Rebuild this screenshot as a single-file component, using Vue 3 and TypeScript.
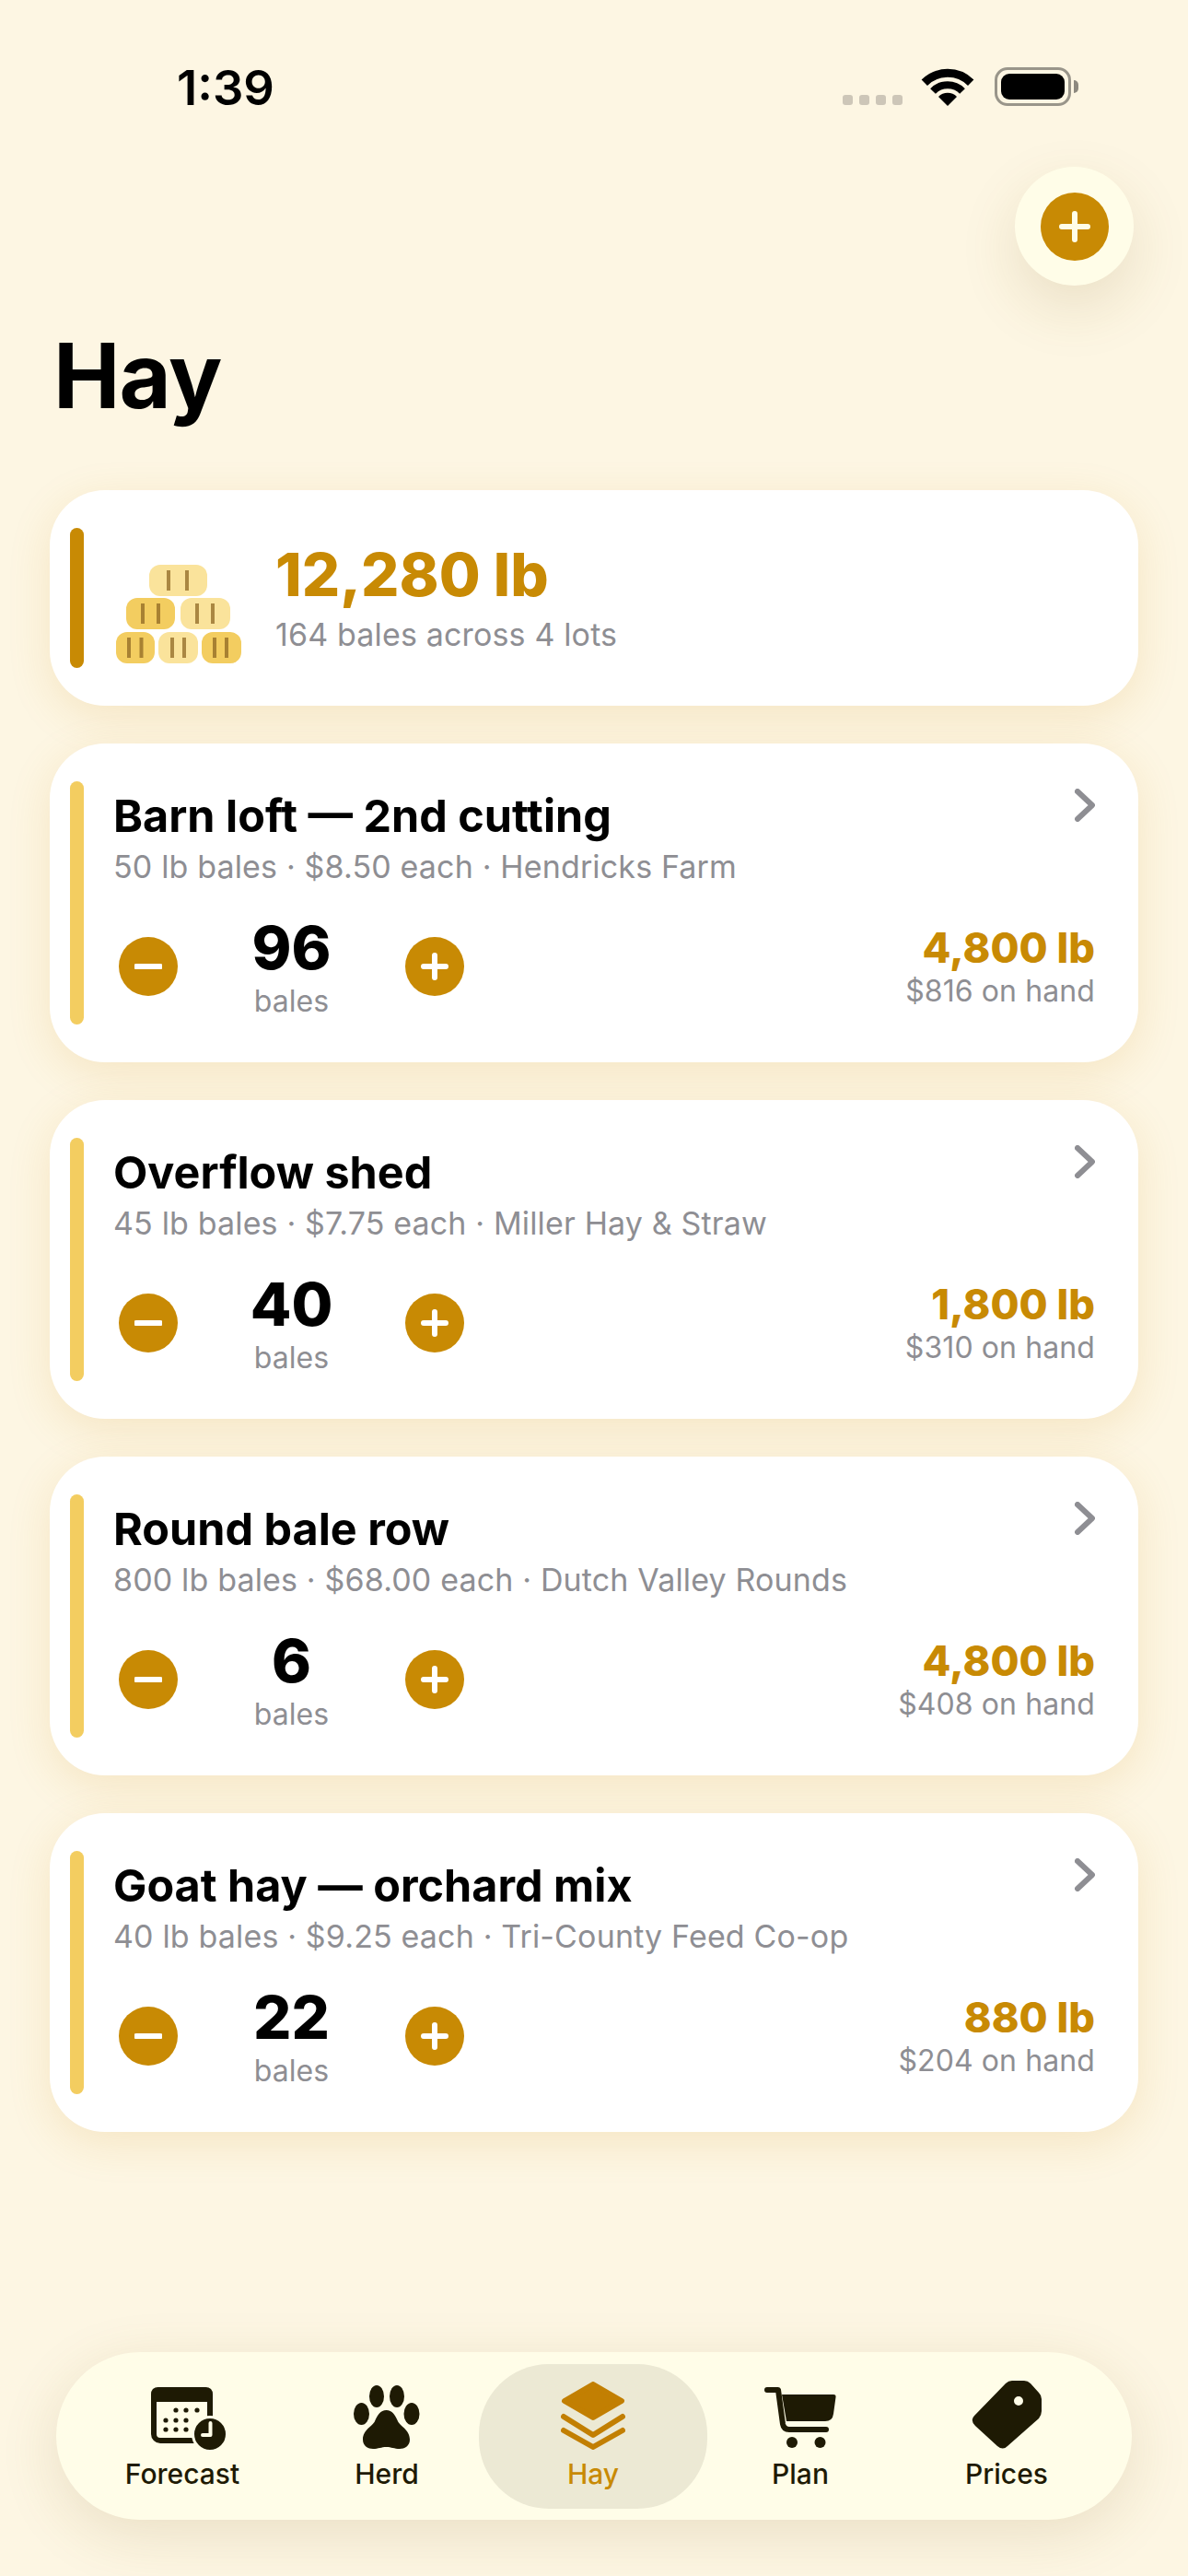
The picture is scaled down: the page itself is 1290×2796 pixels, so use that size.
<script setup lang="ts">
interface Lot {
  name: string;
  detail: string;
  count: number;
  weight: string;
  value: string;
}

const lots: Lot[] = [
  { name: "Barn loft — 2nd cutting", detail: "50 lb bales · $8.50 each · Hendricks Farm", count: 96, weight: "4,800 lb", value: "$816 on hand" },
  { name: "Overflow shed", detail: "45 lb bales · $7.75 each · Miller Hay & Straw", count: 40, weight: "1,800 lb", value: "$310 on hand" },
  { name: "Round bale row", detail: "800 lb bales · $68.00 each · Dutch Valley Rounds", count: 6, weight: "4,800 lb", value: "$408 on hand" },
  { name: "Goat hay — orchard mix", detail: "40 lb bales · $9.25 each · Tri-County Feed Co-op", count: 22, weight: "880 lb", value: "$204 on hand" },
];

const bales = [
  { x: 36, y: 1, w: 63, h: 34, fill: "#fae39b", s: [57, 77] },
  { x: 11, y: 37, w: 53, h: 34, fill: "#f3cd60", s: [29, 46] },
  { x: 70, y: 37, w: 54, h: 34, fill: "#fae39b", s: [88, 105] },
  { x: 0, y: 74, w: 42, h: 34, fill: "#f3cd60", s: [14, 27.5] },
  { x: 46, y: 74, w: 43, h: 34, fill: "#fae39b", s: [61, 74] },
  { x: 93, y: 74, w: 43, h: 34, fill: "#f3cd60", s: [107, 120] },
];

const calendarDots = [
  [27, 25], [38, 25], [50, 25],
  [16, 36], [27, 36], [38, 36],
  [16, 46], [27, 46], [38, 46],
];
</script>

<template>
  <div class="page">
    <header class="status">
      <span class="time">1:39</span>
      <div class="status-icons">
        <div class="signal"><i></i><i></i><i></i><i></i></div>
        <svg class="wifi" width="58" height="42" viewBox="0 0 58 42">
          <path d="M29 42L19 32A14 14 0 0 1 39 32Z" fill="#000" />
          <path d="M13 26A22.5 22.5 0 0 1 45 26" fill="none" stroke="#000" stroke-width="8" />
          <path d="M3.8 16.8A35.6 35.6 0 0 1 54.2 16.8" fill="none" stroke="#000" stroke-width="9" />
        </svg>
        <div class="battery"><span></span></div>
      </div>
    </header>

    <div class="top-action">
      <button class="fab">
        <span class="fab-inner">
          <svg width="34" height="34" viewBox="0 0 34 34"><path d="M17 3V31M3 17H31" stroke="#fffde8" stroke-width="6" stroke-linecap="round" /></svg>
        </span>
      </button>
    </div>

    <h1 class="title">Hay</h1>

    <main class="lots">
      <section class="card summary">
        <div class="bar bar-dark"></div>
        <svg class="stack" width="136" height="108" viewBox="0 0 136 108">
          <g v-for="(b, i) in bales" :key="i">
            <rect :x="b.x" :y="b.y" :width="b.w" :height="b.h" rx="12" :fill="b.fill" />
            <rect v-for="sx in b.s" :key="sx" :x="sx - 2" :y="b.y + 6" width="4" height="22" fill="#8a6420" opacity="0.72" />
          </g>
        </svg>
        <div class="summary-text">
          <div class="total">12,280 lb</div>
          <div class="muted summary-sub">164 bales across 4 lots</div>
        </div>
      </section>

      <section v-for="lot in lots" :key="lot.name" class="card lot">
        <div class="bar"></div>
        <div class="lot-body">
          <div class="lot-head">
            <div class="lot-text">
              <div class="lot-name">{{ lot.name }}</div>
              <div class="muted lot-detail">{{ lot.detail }}</div>
            </div>
            <svg class="chevron" width="22" height="36" viewBox="0 0 22 36"><path d="M3 3L19 18L3 33" fill="none" stroke="#8e8e93" stroke-width="6" stroke-linecap="round" stroke-linejoin="round" /></svg>
          </div>
          <div class="lot-row">
            <div class="stepper">
              <button class="step">
                <svg width="30" height="30" viewBox="0 0 30 30"><path d="M2 15H28" stroke="#fff" stroke-width="6" stroke-linecap="round" /></svg>
              </button>
              <div class="count">
                <div class="count-num">{{ lot.count }}</div>
                <div class="muted count-label">bales</div>
              </div>
              <button class="step">
                <svg width="30" height="30" viewBox="0 0 30 30"><path d="M15 3V27M3 15H27" stroke="#fff" stroke-width="6" stroke-linecap="round" /></svg>
              </button>
            </div>
            <div class="lot-totals">
              <div class="weight">{{ lot.weight }}</div>
              <div class="muted value">{{ lot.value }}</div>
            </div>
          </div>
        </div>
      </section>
    </main>

    <nav class="tabs">
      <div class="tab tab-forecast">
        <svg width="82" height="68" viewBox="0 0 82 68">
          <rect x="3" y="3" width="61" height="55" rx="7" fill="#fffde8" stroke="#1e1a04" stroke-width="6" />
          <path d="M0 16V8Q0 0 8 0H59Q67 0 67 8V16Z" fill="#1e1a04" />
          <circle v-for="(d, i) in calendarDots" :key="i" :cx="d[0]" :cy="d[1]" r="2.6" fill="#1e1a04" />
          <circle cx="64" cy="51" r="18.5" fill="#1e1a04" stroke="#fffde8" stroke-width="3" />
          <path d="M64.5 39V52H56" fill="none" stroke="#fffde8" stroke-width="4" stroke-linecap="round" stroke-linejoin="round" />
        </svg>
        <span>Forecast</span>
      </div>
      <div class="tab">
        <svg width="72" height="70" viewBox="0 0 72 70" fill="#1e1a04">
          <ellipse cx="25" cy="12" rx="8" ry="12" />
          <ellipse cx="47" cy="12" rx="8" ry="12" />
          <ellipse cx="8.5" cy="31" rx="8.5" ry="12" />
          <ellipse cx="63" cy="31" rx="8.5" ry="12" />
          <path d="M35.5 27C42 27 45 32 48 39C50 44 61 48 61 59C61 66 55 69 50 69C44 69 41 67 35.5 67C30 67 27 69 21 69C16 69 10 66 10 59C10 48 21 44 23 39C26 32 29 27 35.5 27Z" />
        </svg>
        <span>Herd</span>
      </div>
      <div class="tab tab-active">
        <svg width="70" height="74" viewBox="0 0 70 74">
          <path d="M35 3L66 21L35 39L4 21Z" fill="#c27f02" stroke="#c27f02" stroke-width="6" stroke-linejoin="round" />
          <path d="M3 38L35 58L67 38" fill="none" stroke="#c27f02" stroke-width="6" stroke-linecap="round" stroke-linejoin="round" />
          <path d="M3 53L35 71L67 53" fill="none" stroke="#c27f02" stroke-width="6" stroke-linecap="round" stroke-linejoin="round" />
        </svg>
        <span>Hay</span>
      </div>
      <div class="tab">
        <svg width="78" height="68" viewBox="0 0 78 68" fill="#1e1a04">
          <path d="M3 3H15L20 40Q21 46 27 46H67" fill="none" stroke="#1e1a04" stroke-width="6" stroke-linecap="round" stroke-linejoin="round" />
          <path d="M19 8H75Q78 8 77.5 11L75 29Q74 37 66 37H24Z" />
          <circle cx="30" cy="60" r="6" />
          <circle cx="60.5" cy="60" r="6" />
        </svg>
        <span>Plan</span>
      </div>
      <div class="tab">
        <svg width="76" height="75" viewBox="0 0 76 75">
          <path fill-rule="evenodd" fill="#1e1a04" d="M37 3Q40 0 44 0H57Q61 0 64 3L73 13Q76 16 76 20V33Q76 37 73 41L39 71Q34 76 28 71L4 49Q-2 43 3 38ZM51 17A5 5 0 1 0 51 27A5 5 0 1 0 51 17Z" />
        </svg>
        <span>Prices</span>
      </div>
    </nav>
  </div>
</template>

<style>
body {
  background: #fdf6e3;
}
</style>

<style scoped>
.page {
  width: 1290px;
  height: 2796px;
  display: flex;
  flex-direction: column;
  background: #fdf6e3;
  font-family: Inter, "Liberation Sans", sans-serif;
  color: #000;
  overflow: hidden;
}

.status {
  display: flex;
  justify-content: space-between;
  align-items: flex-start;
  padding: 64px 127px 0 192px;
  height: 181px;
  box-sizing: border-box;
}

.time {
  font-size: 52.5px;
  line-height: 62px;
  font-weight: 600;
}

.status-icons {
  display: flex;
  align-items: flex-end;
  padding-top: 9px;
}

.signal {
  display: flex;
  gap: 7px;
  margin: 0 20px 0 0;
  padding-bottom: 1px;
}

.signal i {
  width: 11px;
  height: 11px;
  border-radius: 3px;
  background: #cdc6b8;
}

.wifi {
  margin-right: 22px;
}

.battery {
  position: relative;
  width: 83px;
  height: 42px;
  box-sizing: border-box;
  border: 3px solid #99958a;
  border-radius: 14px;
  padding: 4px;
}

.battery span {
  display: block;
  height: 100%;
  background: #000;
  border-radius: 9px;
}

.battery::after {
  content: "";
  position: absolute;
  right: -11px;
  top: 11px;
  width: 5px;
  height: 14px;
  background: #8d897f;
  border-radius: 0 7px 7px 0;
}

.top-action {
  display: flex;
  justify-content: flex-end;
  padding-right: 59px;
}

.fab {
  width: 129px;
  height: 129px;
  border: 0;
  padding: 0;
  border-radius: 50%;
  background: #fffde8;
  box-shadow: 0 24px 64px rgba(120, 90, 20, 0.14);
  display: flex;
  align-items: center;
  justify-content: center;
}

.fab-inner {
  width: 74px;
  height: 74px;
  border-radius: 50%;
  background: #c88a04;
  display: flex;
  align-items: center;
  justify-content: center;
}

.title {
  margin: 38px 0 0 58px;
  font-size: 97px;
  line-height: 120px;
  font-weight: 700;
  letter-spacing: -1px;
}

.lots {
  margin: 64px 54px 0;
  display: flex;
  flex-direction: column;
  gap: 41px;
}

.card {
  display: flex;
  background: #fff;
  border-radius: 60px;
  padding: 41px 47px 41px 22px;
  box-shadow: 0 12px 48px rgba(200, 138, 4, 0.14);
}

.bar {
  width: 15px;
  flex-shrink: 0;
  border-radius: 8px;
  background: #f3cd60;
}

.bar-dark {
  background: #c88a04;
}

.muted {
  color: #8e8e93;
}

.summary {
  align-items: center;
  height: 234px;
  box-sizing: border-box;
}

.summary .bar {
  align-self: stretch;
}

.stack {
  margin: 34px 37px 0 35px;
  flex-shrink: 0;
}

.total {
  font-size: 65px;
  line-height: 74px;
  font-weight: 800;
  color: #c88a04;
}

.summary-sub {
  margin-top: 5px;
  font-size: 34px;
  line-height: 46px;
  letter-spacing: 0.15px;
}

.lot {
  height: 346px;
  box-sizing: border-box;
}

.lot-body {
  flex: 1;
  margin-left: 32px;
}

.lot-head {
  display: flex;
  justify-content: space-between;
  align-items: flex-start;
}

.lot-text {
  padding-top: 9px;
}

.lot-name {
  font-size: 48.5px;
  line-height: 58px;
  font-weight: 700;
}

.lot-detail {
  margin-top: 5px;
  font-size: 34px;
  line-height: 42px;
  letter-spacing: 0.15px;
}

.chevron {
  margin-top: 8px;
}

.lot-row {
  display: flex;
  justify-content: space-between;
  align-items: center;
  margin-top: 30px;
}

.stepper {
  display: flex;
  align-items: center;
  margin-left: 6px;
}

.step {
  width: 64px;
  height: 64px;
  border: 0;
  padding: 0;
  border-radius: 50%;
  background: #c88a04;
  display: flex;
  align-items: center;
  justify-content: center;
}

.count {
  width: 247px;
  text-align: center;
}

.count-num {
  padding-top: 3px;
  font-size: 65px;
  line-height: 67px;
  font-weight: 800;
}

.count-label {
  margin-top: 6px;
  font-size: 32px;
  line-height: 38px;
  letter-spacing: 0.1px;
}

.lot-totals {
  text-align: right;
}

.weight {
  padding-top: 2px;
  font-size: 45px;
  line-height: 52px;
  font-weight: 800;
  color: #c88a04;
}

.value {
  font-size: 32px;
  line-height: 42px;
  letter-spacing: 0.1px;
}

.tabs {
  margin: auto 61px 61px;
  height: 182px;
  box-sizing: border-box;
  padding-left: 26px;
  display: flex;
  align-items: center;
  border-radius: 91px;
  background: #fffde8;
  box-shadow: 0 16px 64px rgba(120, 90, 20, 0.14);
}

.tab {
  width: 224px;
  height: 157px;
  display: flex;
  flex-direction: column;
  align-items: center;
  justify-content: flex-end;
  padding-bottom: 20px;
  box-sizing: border-box;
  font-size: 30px;
  line-height: 36px;
  font-weight: 500;
  color: #1e1a04;
}

.tab svg {
  margin-bottom: 8px;
}

.tab-forecast {
  width: 222px;
}

.tab-forecast svg {
  transform: translateX(7px);
}

.tab:nth-child(2) {
  width: 222px;
}

.tab-active {
  width: 248px;
  margin: 0 -11px;
  border-radius: 76px;
  background: #ece9d4;
  color: #c88a04;
}
</style>
